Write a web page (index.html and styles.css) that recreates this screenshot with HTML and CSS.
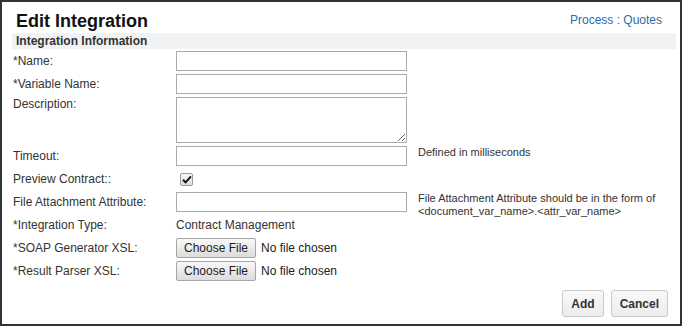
FILE: index.html
```html
<!DOCTYPE html>
<html lang="en">
<head>
  <meta charset="UTF-8" />
  <title>Edit Integration</title>
  <link rel="stylesheet" href="styles.css">
</head>
<body>
  <div class="panel">
    <div class="title-row">
      <h1>Edit Integration</h1>
      <a href="#" class="crumb">Process : Quotes</a>
    </div>

    <div class="section-bar">Integration Information</div>

    <form class="fields">
      <label>*Name:</label>
      <input type="text" class="field">
      <span></span>

      <label>*Variable Name:</label>
      <input type="text" class="field">
      <span></span>

      <label class="top">Description:</label>
      <textarea class="field area"></textarea>
      <span></span>

      <label>Timeout:</label>
      <input type="text" class="field">
      <span class="hint">Defined in milliseconds</span>

      <label>Preview Contract::</label>
      <div class="check-cell">
        <span class="checkbox">
          <svg width="10" height="9" viewBox="0 0 10 9"><path d="M1 4.8 L3.6 7.4 L9 1.4" fill="none" stroke="#111" stroke-width="2"/></svg>
        </span>
      </div>
      <span></span>

      <label>File Attachment Attribute:</label>
      <input type="text" class="field">
      <span class="hint">File Attachment Attribute should be in the form of<br>&lt;document_var_name&gt;.&lt;attr_var_name&gt;</span>

      <label>*Integration Type:</label>
      <div class="value">Contract Management</div>
      <span></span>

      <label>*SOAP Generator XSL:</label>
      <div class="file-cell"><button type="button" class="file-btn">Choose File</button><span>No file chosen</span></div>
      <span></span>

      <label>*Result Parser XSL:</label>
      <div class="file-cell"><button type="button" class="file-btn">Choose File</button><span>No file chosen</span></div>
      <span></span>
    </form>

    <div class="actions">
      <button type="button" class="btn">Add</button>
      <button type="button" class="btn">Cancel</button>
    </div>
  </div>
</body>
</html>
```

FILE: styles.css
```css
body {
  margin: 0;
  font-family: "Liberation Sans", Arial, sans-serif;
  font-size: 12px;
  color: #333;
  background: #fff;
}

.panel {
  width: 682px;
  height: 326px;
  box-sizing: border-box;
  border: 2px solid #333;
  padding: 8px 4px 0 10px;
}

.title-row {
  display: flex;
  justify-content: space-between;
  align-items: flex-start;
  padding: 0 14px 0 4px;
}

h1 {
  margin: 0;
  font-size: 18px;
  line-height: 22px;
  font-weight: 700;
  color: #111;
}

.crumb {
  margin-top: 3px;
  font-size: 12px;
  line-height: 14px;
  color: #2f6aa8;
  text-decoration: none;
}

.section-bar {
  margin-top: 1px;
  height: 16px;
  line-height: 16px;
  padding-left: 4px;
  background-color: #f1f2f4;
  font-weight: 700;
  color: #333;
}

.fields {
  display: grid;
  grid-template-columns: 164px 231px 1fr;
  grid-template-rows: 20px 20px 46px 20px 20px 20px 20px 20px 20px;
  row-gap: 3px;
  margin-top: 2px;
}

.fields label {
  padding-left: 1px;
  line-height: 20px;
  white-space: nowrap;
}

.fields label.top {
  line-height: 14px;
}

.field {
  box-sizing: border-box;
  width: 231px;
  height: 20px;
  margin: 0;
  border: 1px solid #aeaba6;
  background: #fff;
  font-family: inherit;
  font-size: 12px;
}

.area {
  height: 46px;
  resize: both;
}

.hint {
  margin-left: 11px;
  font-size: 11px;
  line-height: 13px;
  color: #333;
  white-space: nowrap;
}

.check-cell {
  display: flex;
  align-items: center;
  padding-left: 4px;
}

.checkbox {
  box-sizing: border-box;
  width: 13px;
  height: 13px;
  border: 1px solid #9a9a9a;
  border-radius: 2px;
  background: linear-gradient(#f6f6f6, #dedede);
  display: flex;
  align-items: center;
  justify-content: center;
}

.value {
  line-height: 20px;
}

.file-cell {
  display: flex;
  align-items: center;
  gap: 5px;
  white-space: nowrap;
  color: #222;
}

.file-btn {
  box-sizing: border-box;
  width: 80px;
  height: 20px;
  padding: 0;
  border: 1px solid #a6a6a6;
  border-radius: 2px;
  background: linear-gradient(#f9f9f9, #dcdcdc);
  font-family: inherit;
  font-size: 12px;
  color: #222;
}

.actions {
  display: flex;
  justify-content: flex-end;
  gap: 7px;
  margin-top: 9px;
  padding-right: 8px;
}

.btn {
  height: 27px;
  padding: 0 8px;
  border: 1px solid #c9c9c9;
  border-radius: 3px;
  background: linear-gradient(#f9f9f9, #ececec);
  font-family: inherit;
  font-size: 12px;
  font-weight: 700;
  color: #333;
}
```
